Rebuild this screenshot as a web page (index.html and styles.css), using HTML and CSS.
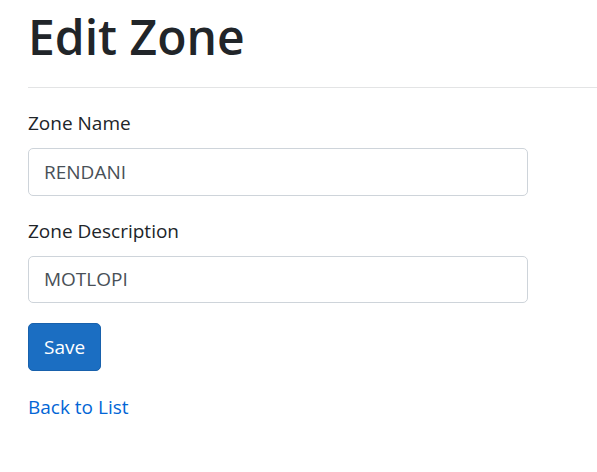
FILE: index.html
```html
<!DOCTYPE html>
<html>
<head>
<meta charset="utf-8">
<link rel="stylesheet" href="styles.css">
</head>
<body>
<main class="page">
  <h1 class="title">Edit Zone</h1>
  <hr class="rule">
  <form class="form">
    <div class="group">
      <label class="label" for="name">Zone Name</label>
      <input class="input" id="name" type="text" value="RENDANI">
    </div>
    <div class="group">
      <label class="label" for="desc">Zone Description</label>
      <input class="input" id="desc" type="text" value="MOTLOPI">
    </div>
    <div class="group">
      <button class="btn" type="button">Save</button>
    </div>
  </form>
  <div class="back"><a class="link" href="#">Back to List</a></div>
</main>
</body>
</html>
```

FILE: styles.css
```css
html, body {
  margin: 0;
  padding: 0;
  background: #fff;
}
body {
  font-family: "Open Sans", "Noto Sans", sans-serif;
  font-size: 19px;
  line-height: 30px;
  color: #212529;
}
.page {
  padding: 7px 0 0 28px;
}
.title {
  margin: 0 0 20px 0;
  font-size: 48px;
  font-weight: 600;
  line-height: 60px;
}
.rule {
  margin: 0 0 20px 0;
  border: 0;
  border-top: 1px solid #e3e4e5;
  height: 0;
}
.form {
  margin: 0 0 21px 0;
}
.group {
  margin-bottom: 20px;
}
.label {
  display: block;
  margin-bottom: 10px;
}
.input {
  display: block;
  box-sizing: border-box;
  width: 500px;
  height: 47.5px;
  padding: 7px 15px;
  font-family: inherit;
  font-size: 19px;
  line-height: 30px;
  color: #495057;
  background: #fff;
  border: 1px solid #ced4da;
  border-radius: 5px;
}
.btn {
  box-sizing: border-box;
  height: 47.5px;
  padding: 7px 15px;
  font-family: inherit;
  font-size: 19px;
  line-height: 30px;
  color: #fff;
  background: #1b6ec2;
  border: 1px solid #1861ac;
  border-radius: 5px;
}
.back {
  line-height: 30px;
}
.link {
  color: #0366d6;
  text-decoration: none;
}
```
